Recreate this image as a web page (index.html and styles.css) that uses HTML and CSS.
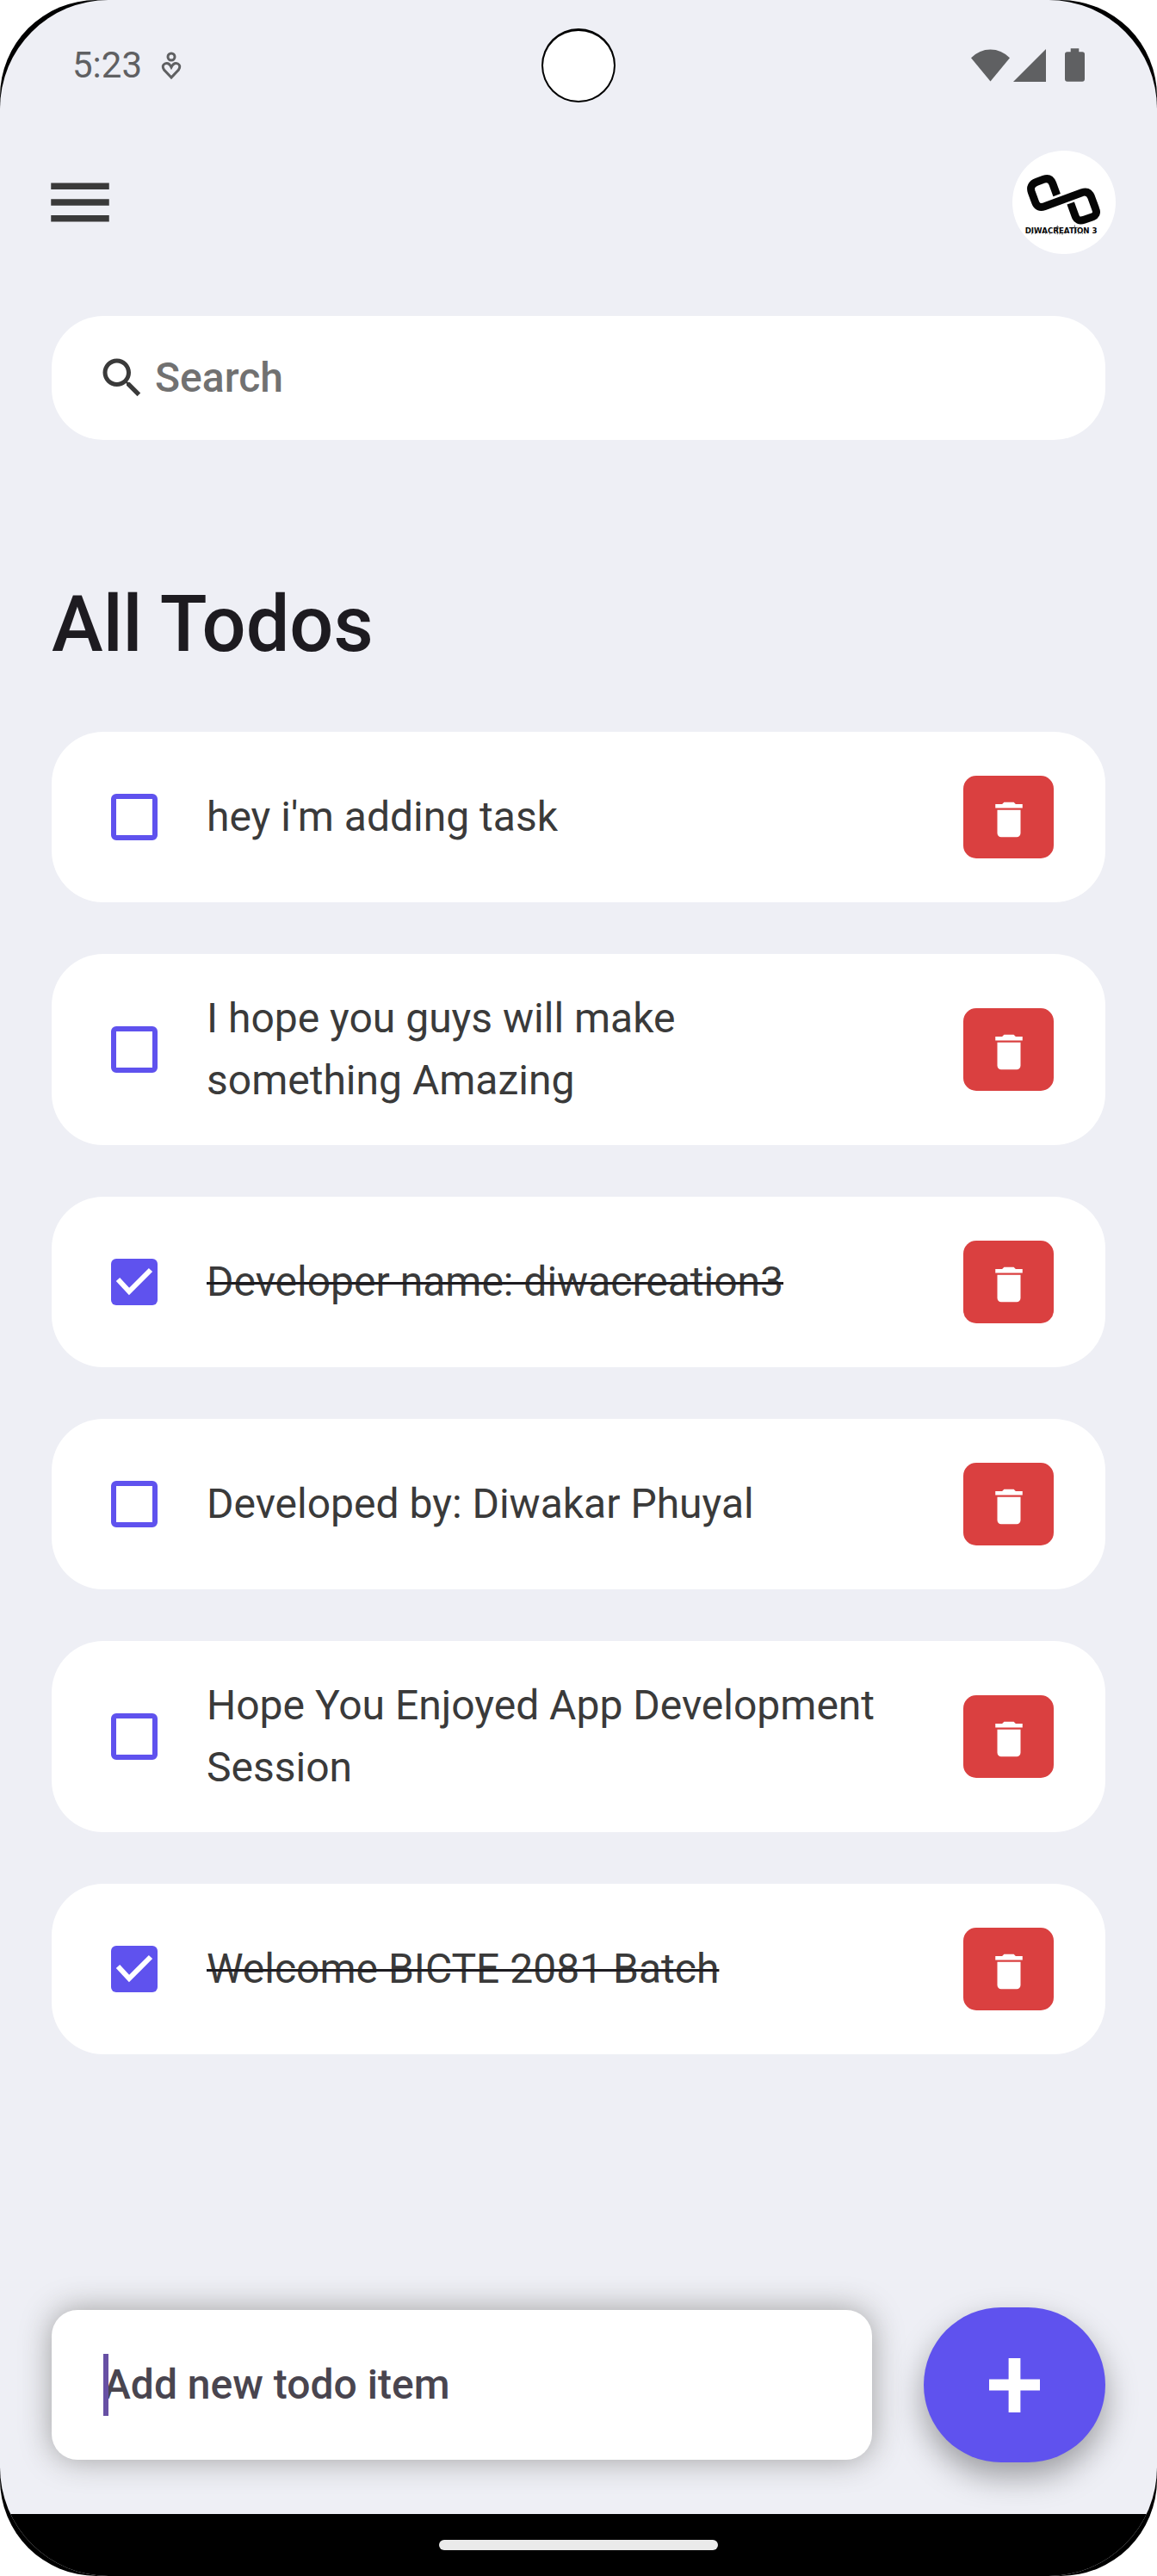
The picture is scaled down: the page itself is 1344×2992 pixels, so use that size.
FILE: index.html
```html
<!DOCTYPE html>
<html lang="en">
<head>
<meta charset="utf-8">
<meta name="viewport" content="width=device-width, initial-scale=1">
<title>All Todos</title>
<link rel="stylesheet" href="styles.css">
</head>
<body>
<svg class="sprite" aria-hidden="true">
  <symbol id="trash" viewBox="0 0 24 24"><path d="M6 19c0 1.1.9 2 2 2h8c1.1 0 2-.9 2-2V7H6v12zM19 4h-3.5l-1-1h-5l-1 1H5v2h14V4z"/></symbol>
</svg>
<div class="device">
  <div class="screen">
    <div class="status">
      <div class="status-group">
        <span class="clock">5:23</span>
        <svg class="heart" viewBox="0 0 24 34" aria-hidden="true"><ellipse cx="12" cy="7" rx="4" ry="4"/><path d="M12 31 L3.5 22 Q0.5 17 4.5 15 Q9 13 12 19 Q15 13 19.5 15 Q23.5 17 20.5 22 Z"/></svg>
      </div>
      <span class="camera"></span>
      <div class="status-group status-icons">
        <svg class="wifi" viewBox="0 0 46 38" aria-hidden="true"><path d="M0 10 Q10 0 23 0 Q36 0 46 10 L23 38 Z"/></svg>
        <svg class="signal" viewBox="0 0 38 38" aria-hidden="true"><path d="M38 0 V38 H0 Z"/></svg>
        <svg class="battery" viewBox="0 0 24 40" aria-hidden="true"><path d="M7 0 H17 V4 H21 Q24 4 24 7 V37 Q24 40 21 40 H3 Q0 40 0 37 V7 Q0 4 3 4 H7 Z"/></svg>
      </div>
    </div>

    <header class="topbar">
      <button class="menu" type="button" aria-label="Menu"><svg viewBox="0 0 24 24" aria-hidden="true"><path d="M3 18h18v-2H3v2zm0-5h18v-2H3v2zm0-7v2h18V6H3z"/></svg></button>
      <svg class="logo" viewBox="18 30 360 360" role="img" aria-label="Diwacreation 3">
        <circle cx="198" cy="210" r="180" fill="#fff"/>
        <path d="M173 185 L158 144 Q149 122 127 130 L103 139 Q76 149 85 175 L98 210 Q106 232 130 224 L260 176 Q284 168 293 192 L308 233 Q317 254 294 262 L268 271 Q244 279 237 257 L221 213" fill="none" stroke="#060606" stroke-width="27"/>
        <path d="M86 316v6M98 314v7M134 316v5M148 316v6M166 300h18M170 296h10M175 290v32M183 316v6M168 316v5M192 316v8M204 314v6M222 298h26M235 289v32M248 316v5M262 316v5M272 316v4" fill="none" stroke="#333" stroke-width="2"/>
        <text class="logo-text" x="62" y="318">DIWACREATION 3</text>
      </svg>
    </header>

    <main class="content">
      <label class="search">
        <svg viewBox="0 0 24 24" aria-hidden="true"><path d="M15.5 14h-.79l-.28-.27C15.41 12.59 16 11.11 16 9.5 16 5.91 13.09 3 9.5 3S3 5.91 3 9.5 5.91 16 9.5 16c1.61 0 3.09-.59 4.23-1.57l.27.28v.79l5 4.99L20.49 19l-4.99-5zm-6 0C7.01 14 5 11.99 5 9.5S7.01 5 9.5 5 14 7.01 14 9.5 11.99 14 9.5 14z"/></svg>
        <input type="search" placeholder="Search" aria-label="Search">
      </label>

      <h1 class="title">All Todos</h1>

      <ul class="todos">
        <li class="todo">
          <input type="checkbox" id="t1"><label for="t1">hey i'm adding task</label>
          <button class="delete" type="button" aria-label="Delete"><svg><use href="#trash"/></svg></button>
        </li>
        <li class="todo">
          <input type="checkbox" id="t2"><label for="t2">I hope you guys will make<br>something Amazing</label>
          <button class="delete" type="button" aria-label="Delete"><svg><use href="#trash"/></svg></button>
        </li>
        <li class="todo">
          <input type="checkbox" id="t3" checked><label for="t3">Developer name: diwacreation3</label>
          <button class="delete" type="button" aria-label="Delete"><svg><use href="#trash"/></svg></button>
        </li>
        <li class="todo">
          <input type="checkbox" id="t4"><label for="t4">Developed by: Diwakar Phuyal</label>
          <button class="delete" type="button" aria-label="Delete"><svg><use href="#trash"/></svg></button>
        </li>
        <li class="todo">
          <input type="checkbox" id="t5"><label for="t5">Hope You Enjoyed App Development<br>Session</label>
          <button class="delete" type="button" aria-label="Delete"><svg><use href="#trash"/></svg></button>
        </li>
        <li class="todo">
          <input type="checkbox" id="t6" checked><label for="t6">Welcome BICTE 2081 Batch</label>
          <button class="delete" type="button" aria-label="Delete"><svg><use href="#trash"/></svg></button>
        </li>
      </ul>
    </main>

    <form class="composer">
      <div class="field">
        <input type="text" placeholder="Add new todo item" aria-label="Add new todo item">
        <span class="caret"></span>
      </div>
      <button class="add" type="button" aria-label="Add todo"><svg viewBox="0 0 60 64" aria-hidden="true"><path d="M23 0h14v25h23v13H37v26H23V38H0V25h23z"/></svg></button>
    </form>

    <div class="navbar"><span class="pill"></span></div>
  </div>
</div>
</body>
</html>
```
FILE: styles.css
```css
* { box-sizing: border-box; }

body {
  margin: 0;
  background: #fff;
  color: #3a3a3a;
  font-family: Roboto, "Liberation Sans", sans-serif;
  font-size: 48px;
  line-height: 72px;
}

button, input { font: inherit; color: inherit; border: 0; padding: 0; margin: 0; }
button { cursor: pointer; }
svg { display: block; fill: currentColor; }
.sprite { display: none; }

/* Phone shell */
.device {
  min-height: 100vh;
  display: flex;
  background: #000;
  border-radius: 112px;
  overflow: hidden;
}
.screen {
  flex: 1;
  min-width: 0;
  display: flex;
  flex-direction: column;
  background: #eeeff5;
  border-radius: 126px;
  overflow: hidden;
}

/* Status bar */
.status {
  height: 151px;
  padding: 0 84px;
  display: grid;
  grid-template-columns: 1fr auto 1fr;
  align-items: center;
  color: #5f6062;
}
.status-group { display: flex; align-items: center; gap: 22px; }
.clock { font-size: 42px; line-height: 48px; }
.heart { width: 24px; height: 34px; fill: none; stroke: currentColor; stroke-width: 3; }
.camera {
  width: 86px;
  height: 86px;
  border: 2px solid #000;
  border-top-width: 3px;
  border-radius: 50%;
  background: #fff;
}
.status-icons { justify-content: flex-end; gap: 4px; }
.wifi { width: 45px; height: 38px; }
.signal { width: 38px; height: 38px; }
.battery { width: 23px; height: 39px; margin-left: 18px; }

/* Header */
.topbar {
  height: 168px;
  padding: 0 48px;
  display: flex;
  align-items: center;
  justify-content: space-between;
}
.menu { background: none; }
.menu svg { width: 90px; height: 90px; }
.logo { width: 120px; height: 120px; }
.logo-text { font: 700 26px "DejaVu Sans", sans-serif; fill: #060606; }

.content { flex: 1; padding: 48px 60px 60px; }

.search {
  height: 144px;
  padding: 0 60px 0 52px;
  display: flex;
  align-items: center;
  gap: 8px;
  background: #fff;
  border-radius: 60px;
}
.search svg { width: 60px; height: 60px; flex: none; }
.search input {
  flex: 1;
  min-width: 0;
  height: 72px;
  background: none;
  font-weight: 500;
  outline: 0;
  appearance: none;
}
.search input::placeholder { color: #717171; opacity: 1; }

.title {
  margin: 150px 0 60px;
  color: #1d1b20;
  font-size: 90px;
  font-weight: 500;
  line-height: 129px;
}

/* Todo list */
.todos {
  margin: 0;
  padding: 0;
  list-style: none;
  display: flex;
  flex-direction: column;
  gap: 60px;
}
.todo {
  min-height: 198px;
  padding: 39px 60px 39px 69px;
  display: flex;
  align-items: center;
  background: #fff;
  border-radius: 60px;
}
.todo label { flex: 1; margin: 0 48px 0 57px; }
.todo input {
  appearance: none;
  flex: none;
  width: 54px;
  height: 54px;
  border: 6px solid #5f52ee;
  border-radius: 6px;
}
.todo input:checked {
  background: #5f52ee url("data:image/svg+xml,%3Csvg xmlns='http://www.w3.org/2000/svg' viewBox='0 0 54 54'%3E%3Cpath d='M8 24 L21 38 L46 13' fill='none' stroke='white' stroke-width='6'/%3E%3C/svg%3E") center / 54px 54px no-repeat border-box;
  border-color: transparent;
}
.todo input:checked + label {
  text-decoration: line-through #1d1b20 3px;
}
.delete {
  flex: none;
  width: 105px;
  height: 96px;
  padding-top: 6px;
  display: flex;
  align-items: center;
  justify-content: center;
  background: #da4040;
  border-radius: 15px;
  color: #fff;
}
.delete svg { width: 54px; height: 54px; }

/* New item form */
.composer {
  padding: 0 60px 60px;
  display: flex;
  align-items: center;
  gap: 60px;
}
.field {
  position: relative;
  flex: 1;
  padding: 51px 60px;
  display: flex;
  background: #fff;
  border-radius: 30px;
  box-shadow: 0 0 36px #9e9e9e;
}
.field input {
  flex: 1;
  min-width: 0;
  height: 72px;
  background: none;
  font-weight: 500;
  outline: 0;
}
.field input::placeholder { color: #49454f; opacity: 1; }
.caret {
  position: absolute;
  left: 60px;
  top: 51px;
  width: 6px;
  height: 72px;
  background: #6750a4;
}
.add {
  width: 211px;
  height: 180px;
  display: flex;
  align-items: center;
  justify-content: center;
  background: #5f52ee;
  border-radius: 90px;
  color: #fff;
  box-shadow: 0 16px 36px rgba(0, 0, 0, 0.35);
}
.add svg { width: 59px; height: 63px; }

/* Gesture bar */
.navbar {
  height: 72px;
  display: flex;
  align-items: center;
  justify-content: center;
  background: #000;
}
.pill { width: 324px; height: 12px; border-radius: 6px; background: #eaeaea; }
```
